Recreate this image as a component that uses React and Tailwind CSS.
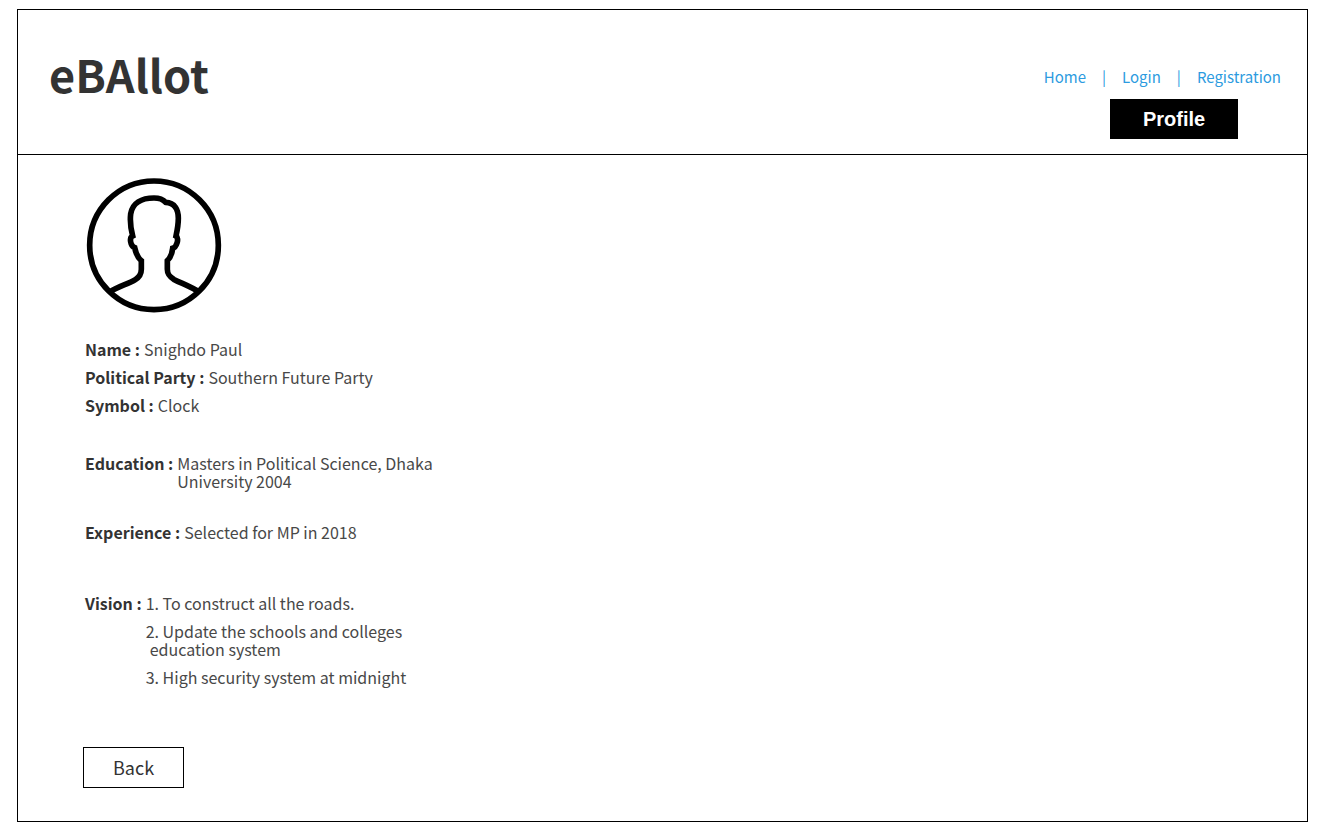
const links = [
  { label: "Home", href: "#home" },
  { label: "Login", href: "#login" },
  { label: "Registration", href: "#registration" },
];

function Avatar() {
  return (
    <svg
      viewBox="33 21 408 408"
      className="size-[136px]"
      fill="none"
      stroke="#000"
      strokeWidth="17"
      role="img"
      aria-label="Candidate portrait"
    >
      <circle cx="237" cy="226" r="193" />
      <path d="M104 366C128 350 160 342 181 329C194 321 199 312 199 298V272C189 264 182 248 179 233C169 229 165 214 167 206C167 202 169 200 173 198C167 175 165 150 167 132C172 99 200 84 237 84C252 84 264 88 272 97C300 98 310 120 310 145C310 165 307 180 303 198C308 201 309 211 306 219C303 229 300 233 293 235C291 250 286 264 277 272V298C277 314 284 321 298 329C322 341 348 350 372 366" />
    </svg>
  );
}

function Detail({ label, children }) {
  return (
    <div className="flex gap-1">
      <dt className="shrink-0 font-bold">{label} :</dt>
      <dd className="text-[#484848]">{children}</dd>
    </div>
  );
}

export default function App() {
  return (
    <div className="bg-white pt-[9px] pr-[13px] pb-[14px] pl-[17px] font-['Noto_Sans_CJK_SC','Noto_Sans',sans-serif] text-[#333333]">
      <div className="border border-black">
        <header className="flex items-start justify-between border-b border-black pt-[34px] pr-[26px] pb-[15px] pl-[31px]">
          <h1 className="text-[45px] leading-[60px] font-bold">eBAllot</h1>
          <div className="flex flex-col items-end gap-[11px] pt-[22px]">
            <nav className="flex gap-4 text-[15px] leading-[22px] font-normal text-[#2c9be0]">
              {links.map((link, i) => (
                <span key={link.label} className="flex gap-4">
                  {i > 0 && <span aria-hidden="true">|</span>}
                  <a href={link.href}>{link.label}</a>
                </span>
              ))}
            </nav>
            <h2 className="mr-[43px] flex h-10 w-32 items-center justify-center bg-black font-['Liberation_Sans',sans-serif] text-xl font-bold text-white">
              Profile
            </h2>
          </div>
        </header>
        <main className="flex flex-col items-start px-[65px] pt-[22px] pb-[33px]">
          <div className="pl-[3px]">
            <Avatar />
          </div>
          <dl className="mt-[27px] max-w-[400px] pl-[2px] text-base leading-[18px] font-normal">
            <div className="flex flex-col gap-[10px]">
              <Detail label="Name">Snighdo Paul</Detail>
              <Detail label="Political Party">Southern Future Party</Detail>
              <Detail label="Symbol">Clock</Detail>
            </div>
            <div className="mt-10">
              <Detail label="Education">Masters in Political Science, Dhaka University 2004</Detail>
            </div>
            <div className="mt-[33px]">
              <Detail label="Experience">Selected for MP in 2018</Detail>
            </div>
            <div className="mt-[53px]">
              <Detail label="Vision">
                <ol className="flex flex-col gap-[10px]">
                  <li>1. To construct all the roads.</li>
                  <li>
                    2. Update the schools and colleges
                    <span className="block pl-1">education system</span>
                  </li>
                  <li>3. High security system at midnight</li>
                </ol>
              </Detail>
            </div>
          </dl>
          <button type="button" className="mt-[61px] border border-black px-[29px] py-[7px] text-lg leading-[25px] font-normal text-[#333333]">
            Back
          </button>
        </main>
      </div>
    </div>
  );
}
